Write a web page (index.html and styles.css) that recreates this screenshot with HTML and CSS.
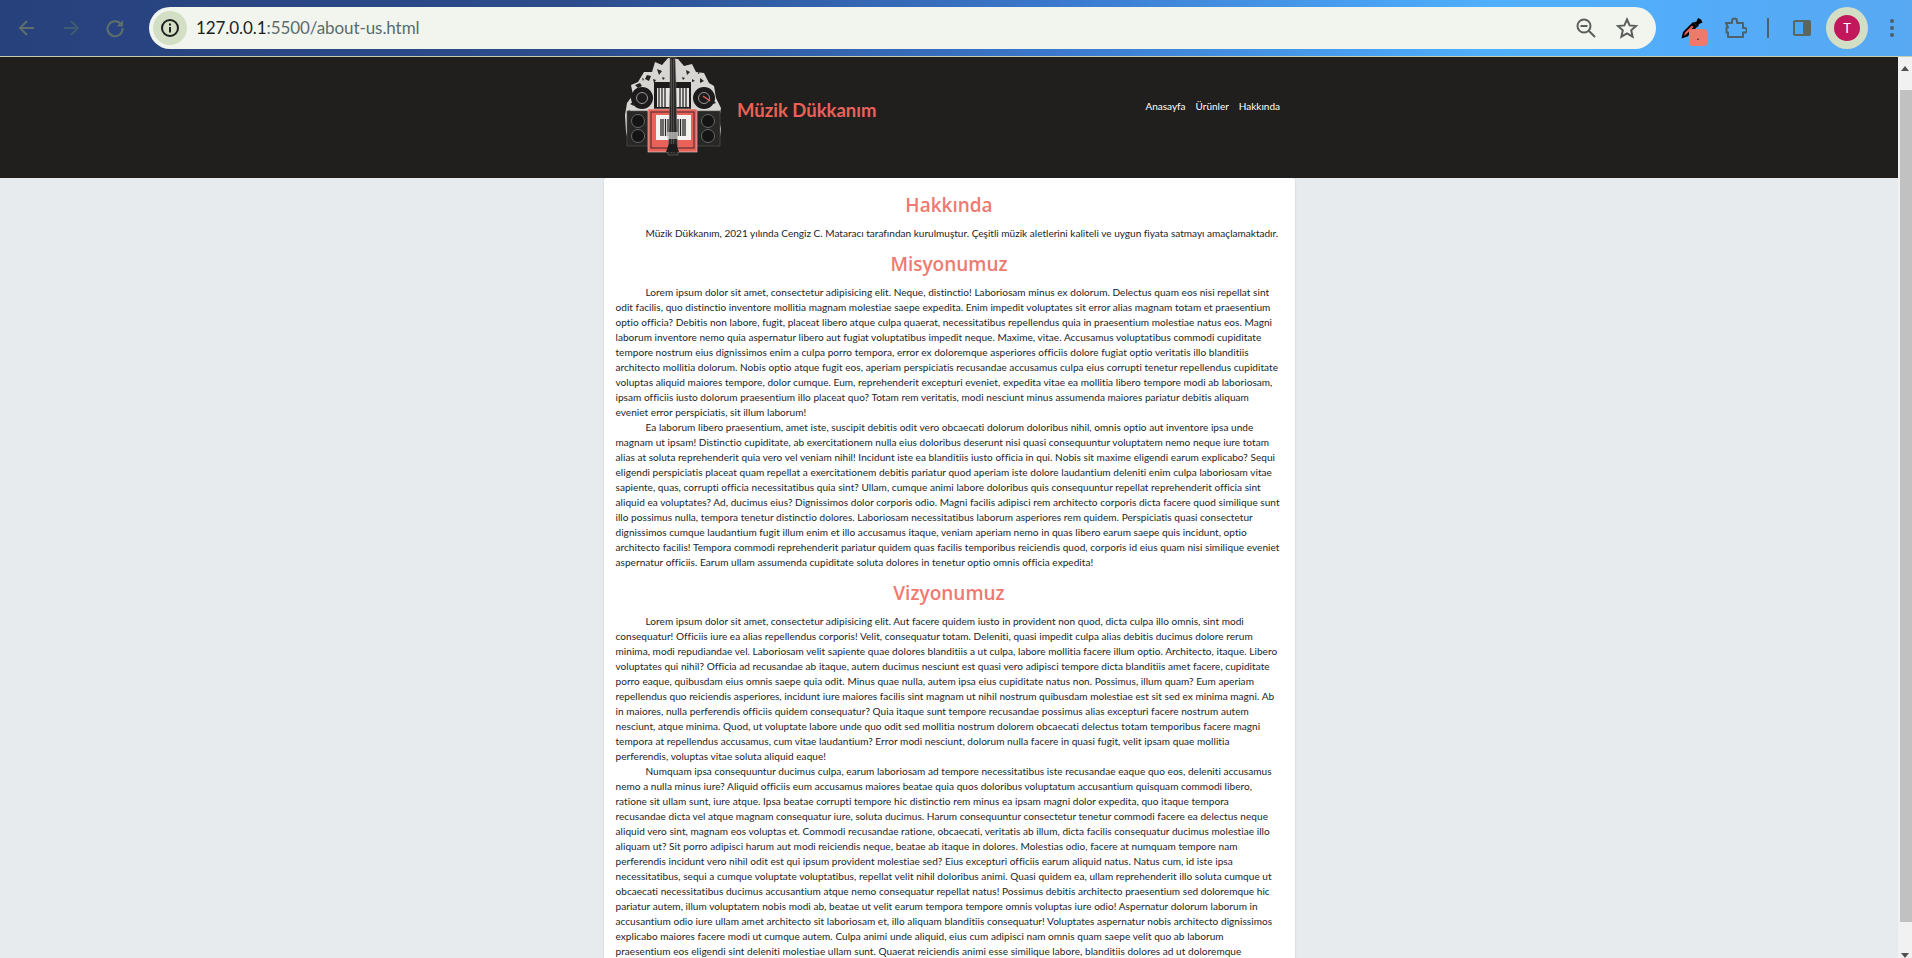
FILE: index.html
```html
<!DOCTYPE html>
<html>
<head>
  <title>Hakkında</title>
  <link rel="stylesheet" href="styles.css">
</head>
<body>
  <div class="toolbar">
    <div class="nav-icons">
      <svg class="icon" width="24" height="24" viewBox="0 0 24 24"><path d="M19 12H6M12 5l-7 7 7 7" fill="none" stroke="#5d6f6a" stroke-width="2"/></svg>
      <svg class="icon" width="24" height="24" viewBox="0 0 24 24"><path d="M5 12h13M12 5l7 7-7 7" fill="none" stroke="#3f5a74" stroke-width="2"/></svg>
      <svg class="icon" width="24" height="24" viewBox="0 0 24 24"><path d="M18.5 9A7.5 7.5 0 1 0 19.5 12" fill="none" stroke="#5d6f6a" stroke-width="2"/><path d="M20 4v6.5h-6.5z" fill="#5d6f6a"/></svg>
    </div>
    <div class="address">
      <span class="site-info">
        <svg width="22" height="22" viewBox="0 0 22 22"><circle cx="11" cy="11" r="8" fill="none" stroke="#1c1f1c" stroke-width="2"/><rect x="10" y="10" width="2" height="5.5" fill="#1c1f1c"/><rect x="10" y="6.5" width="2" height="2" fill="#1c1f1c"/></svg>
      </span>
      <span class="url"><b>127.0.0.1</b>:5500/about-us.html</span>
      <svg class="zoom-icon" width="24" height="24" viewBox="0 0 24 24"><circle cx="10" cy="10" r="6.5" fill="none" stroke="#5a5f5c" stroke-width="2"/><path d="M6.5 10h7M15 15l6 6" fill="none" stroke="#5a5f5c" stroke-width="2"/></svg>
      <svg class="star-icon" width="24" height="24" viewBox="0 0 24 24"><path d="M12 3.500l2.600 5.900 6.400.6-4.800 4.300 1.400 6.300L12 17.300l-5.600 3.300 1.400-6.300L3 10l6.400-.6z" fill="none" stroke="#5a5f5c" stroke-width="2"/></svg>
    </div>
    <div class="ext-icons">
      <span class="picker">
        <svg width="24" height="24" viewBox="0 0 24 24"><path d="M1.500 22.500L3 16 13 6l4.500 4.500-10 10z" fill="#000"/><path d="M4 20l1-3.500 7-7 1.500 1.500-7 7z" fill="#e8625a"/><path d="M13.500 6.500l3-1L18 2l3 1.500 1.500 3-3.500 1.500-1 3z" fill="#000"/></svg>
        <span class="badge">.</span>
      </span>
      <svg class="puzzle" width="24" height="24" viewBox="0 0 24 24"><path d="M3 7h6V5a2.500 2.500 0 0 1 5 0v2h6v5h1.500a2.300 2.300 0 0 1 0 4.600H20V21H5v-4.500H3.500V11.500H5z" fill="none" stroke="#4f6168" stroke-width="2" stroke-linejoin="round"/></svg>
      <span class="divider"></span>
      <svg class="panel" width="20" height="20" viewBox="0 0 20 20"><rect x="1" y="2" width="18" height="16" rx="2" fill="#5a665f"/><rect x="3" y="4" width="8" height="12" fill="#4ca6f8"/></svg>
      <span class="avatar"><span class="avatar-in">T</span></span>
      <span class="dots"><i></i><i></i><i></i></span>
    </div>
  </div>

  <div class="viewport">
    <div class="page">
      <div class="header">
        <div class="header-in">
          <svg class="logo" width="100" height="100" viewBox="0 0 100 100">
            <path d="M1 58L3 46 9 38 7 28 14 25 20 15 28 15 31 5 38 8 44 1 54 2 60 9 68 7 72 15 80 16 85 26 90 29 92 41 97 51 95 62 97 72 95 88 5 88 2 75z" fill="#d8d6d2"/>
            <path d="M11 28l5-2 2 3-4 2zM23 18l4 1-2 5-4-2zM33 12l5 2-3 4zM62 13l4 2-3 3zM76 21l4 3-4 2zM84 31l3 2-3 3zM6 47l3-2 1 4zM29 22l3 1-2 3zM68 22l3 2-3 1zM18 21l2 1-1 2zM38 20l3 1-2 2zM58 20l3 1-2 2zM74 15l2 1-2 1zM90 44l2 2-3 1zM4 54l2-1v3z" fill="#262322"/>
            <circle cx="18" cy="41" r="11" fill="#1d1b1b"/><circle cx="18" cy="41" r="5.500" fill="none" stroke="#999" stroke-width="1"/>
            <circle cx="80" cy="41" r="11" fill="#1d1b1b"/><circle cx="80" cy="41" r="5.500" fill="none" stroke="#999" stroke-width="1"/>
            <path d="M79 39l7 5" stroke="#e8625a" stroke-width="1.500"/>
            <rect x="3" y="54" width="23" height="35" fill="#2a2827" stroke="#555" stroke-width=".6"/>
            <circle cx="14" cy="64" r="6.500" fill="#151414" stroke="#666"/><circle cx="14" cy="79" r="6.500" fill="#151414" stroke="#666"/>
            <rect x="72" y="54" width="24" height="35" fill="#2a2827" stroke="#555" stroke-width=".6"/>
            <circle cx="84" cy="64" r="6.500" fill="#151414" stroke="#666"/><circle cx="84" cy="79" r="6.500" fill="#151414" stroke="#666"/>
            <rect x="30" y="25" width="37" height="27" fill="#1d1b1b"/>
            <path d="M33 31h32v19H33z" fill="#e6e4e0"/>
            <path d="M35 31v19M38 31v19M41 31v19M56 31v19M59 31v19M62 31v19" stroke="#1d1b1b" stroke-width="1.200"/>
            <rect x="24" y="52" width="49" height="43" fill="#e8625a" stroke="#d9d6d2" stroke-width=".6"/>
            <rect x="27" y="55" width="43" height="36" fill="none" stroke="#1d1b1b" stroke-width=".8"/>
            <rect x="32" y="58" width="35" height="25" fill="#f4f3f1"/>
            <path d="M37 62v17M39 62v17M41.500 62v17M44 62v17M47 62v17M51 62v17M54 62v17M56.500 62v17M59 62v17M61 62v17" stroke="#222" stroke-width="1.300"/>
            <path d="M46 0h5l1 28 1 50 1 20H44l1-20 1-50z" fill="#2a2827" stroke="#777" stroke-width=".5"/>
            <path d="M47.500 2v94M49.500 2v94" stroke="#888" stroke-width=".4"/>
            <path d="M42 95l3-8h7l3 8z" fill="#1d1b1b"/>
            <rect x="43" y="75" width="11" height="7" fill="#cfcdc9" opacity=".7"/>
          </svg>
          <div class="brand">Müzik Dükkanım</div>
          <div class="menu">
            <a>Anasayfa</a>
            <a>Ürünler</a>
            <a>Hakkında</a>
          </div>
        </div>
      </div>

      <div class="card">
        <h2>Hakkında</h2>
        <p class="intro">Müzik Dükkanım, 2021 yılında Cengiz C. Mataracı tarafından kurulmuştur. Çeşitli müzik aletlerini kaliteli ve uygun fiyata satmayı amaçlamaktadır.</p>
        <h2>Misyonumuz</h2>
        <p>Lorem ipsum dolor sit amet, consectetur adipisicing elit. Neque, distinctio! Laboriosam minus ex dolorum. Delectus quam eos nisi repellat sint<br>
odit facilis, quo distinctio inventore mollitia magnam molestiae saepe expedita. Enim impedit voluptates sit error alias magnam totam et praesentium<br>
optio officia? Debitis non labore, fugit, placeat libero atque culpa quaerat, necessitatibus repellendus quia in praesentium molestiae natus eos. Magni<br>
laborum inventore nemo quia aspernatur libero aut fugiat voluptatibus impedit neque. Maxime, vitae. Accusamus voluptatibus commodi cupiditate<br>
tempore nostrum eius dignissimos enim a culpa porro tempora, error ex doloremque asperiores officiis dolore fugiat optio veritatis illo blanditiis<br>
architecto mollitia dolorum. Nobis optio atque fugit eos, aperiam perspiciatis recusandae accusamus culpa eius corrupti tenetur repellendus cupiditate<br>
voluptas aliquid maiores tempore, dolor cumque. Eum, reprehenderit excepturi eveniet, expedita vitae ea mollitia libero tempore modi ab laboriosam,<br>
ipsam officiis iusto dolorum praesentium illo placeat quo? Totam rem veritatis, modi nesciunt minus assumenda maiores pariatur debitis aliquam<br>
eveniet error perspiciatis, sit illum laborum!</p>
        <p>Ea laborum libero praesentium, amet iste, suscipit debitis odit vero obcaecati dolorum doloribus nihil, omnis optio aut inventore ipsa unde<br>
magnam ut ipsam! Distinctio cupiditate, ab exercitationem nulla eius doloribus deserunt nisi quasi consequuntur voluptatem nemo neque iure totam<br>
alias at soluta reprehenderit quia vero vel veniam nihil! Incidunt iste ea blanditiis iusto officia in qui. Nobis sit maxime eligendi earum explicabo? Sequi<br>
eligendi perspiciatis placeat quam repellat a exercitationem debitis pariatur quod aperiam iste dolore laudantium deleniti enim culpa laboriosam vitae<br>
sapiente, quas, corrupti officia necessitatibus quia sint? Ullam, cumque animi labore doloribus quis consequuntur repellat reprehenderit officia sint<br>
aliquid ea voluptates? Ad, ducimus eius? Dignissimos dolor corporis odio. Magni facilis adipisci rem architecto corporis dicta facere quod similique sunt<br>
illo possimus nulla, tempora tenetur distinctio dolores. Laboriosam necessitatibus laborum asperiores rem quidem. Perspiciatis quasi consectetur<br>
dignissimos cumque laudantium fugit illum enim et illo accusamus itaque, veniam aperiam nemo in quas libero earum saepe quis incidunt, optio<br>
architecto facilis! Tempora commodi reprehenderit pariatur quidem quas facilis temporibus reiciendis quod, corporis id eius quam nisi similique eveniet<br>
aspernatur officiis. Earum ullam assumenda cupiditate soluta dolores in tenetur optio omnis officia expedita!</p>
        <h2>Vizyonumuz</h2>
        <p>Lorem ipsum dolor sit amet, consectetur adipisicing elit. Aut facere quidem iusto in provident non quod, dicta culpa illo omnis, sint modi<br>
consequatur! Officiis iure ea alias repellendus corporis! Velit, consequatur totam. Deleniti, quasi impedit culpa alias debitis ducimus dolore rerum<br>
minima, modi repudiandae vel. Laboriosam velit sapiente quae dolores blanditiis a ut culpa, labore mollitia facere illum optio. Architecto, itaque. Libero<br>
voluptates qui nihil? Officia ad recusandae ab itaque, autem ducimus nesciunt est quasi vero adipisci tempore dicta blanditiis amet facere, cupiditate<br>
porro eaque, quibusdam eius omnis saepe quia odit. Minus quae nulla, autem ipsa eius cupiditate natus non. Possimus, illum quam? Eum aperiam<br>
repellendus quo reiciendis asperiores, incidunt iure maiores facilis sint magnam ut nihil nostrum quibusdam molestiae est sit sed ex minima magni. Ab<br>
in maiores, nulla perferendis officiis quidem consequatur? Quia itaque sunt tempore recusandae possimus alias excepturi facere nostrum autem<br>
nesciunt, atque minima. Quod, ut voluptate labore unde quo odit sed mollitia nostrum dolorem obcaecati delectus totam temporibus facere magni<br>
tempora at repellendus accusamus, cum vitae laudantium? Error modi nesciunt, dolorum nulla facere in quasi fugit, velit ipsam quae mollitia<br>
perferendis, voluptas vitae soluta aliquid eaque!</p>
        <p>Numquam ipsa consequuntur ducimus culpa, earum laboriosam ad tempore necessitatibus iste recusandae eaque quo eos, deleniti accusamus<br>
nemo a nulla minus iure? Aliquid officiis eum accusamus maiores beatae quia quos doloribus voluptatum accusantium quisquam commodi libero,<br>
ratione sit ullam sunt, iure atque. Ipsa beatae corrupti tempore hic distinctio rem minus ea ipsam magni dolor expedita, quo itaque tempora<br>
recusandae dicta vel atque magnam consequatur iure, soluta ducimus. Harum consequuntur consectetur tenetur commodi facere ea delectus neque<br>
aliquid vero sint, magnam eos voluptas et. Commodi recusandae ratione, obcaecati, veritatis ab illum, dicta facilis consequatur ducimus molestiae illo<br>
aliquam ut? Sit porro adipisci harum aut modi reiciendis neque, beatae ab itaque in dolores. Molestias odio, facere at numquam tempore nam<br>
perferendis incidunt vero nihil odit est qui ipsum provident molestiae sed? Eius excepturi officiis earum aliquid natus. Natus cum, id iste ipsa<br>
necessitatibus, sequi a cumque voluptate voluptatibus, repellat velit nihil doloribus animi. Quasi quidem ea, ullam reprehenderit illo soluta cumque ut<br>
obcaecati necessitatibus ducimus accusantium atque nemo consequatur repellat natus! Possimus debitis architecto praesentium sed doloremque hic<br>
pariatur autem, illum voluptatem nobis modi ab, beatae ut velit earum tempora tempore omnis voluptas iure odio! Aspernatur dolorum laborum in<br>
accusantium odio iure ullam amet architecto sit laboriosam et, illo aliquam blanditiis consequatur! Voluptates aspernatur nobis architecto dignissimos<br>
explicabo maiores facere modi ut cumque autem. Culpa animi unde aliquid, eius cum adipisci nam omnis quam saepe velit quo ab laborum<br>
praesentium eos eligendi sint deleniti molestiae ullam sunt. Quaerat reiciendis animi esse similique labore, blanditiis dolores ad ut doloremque</p>
      </div>
    </div>
    <div class="scrollbar">
      <span class="arrow-up"></span>
      <span class="thumb"></span>
      <span class="arrow-down"></span>
    </div>
  </div>
</body>
</html>
```

FILE: styles.css
```css
html, body {
  margin: 0;
  height: 100%;
  overflow: hidden;
}

body {
  font-family: "Lato", "Open Sans", sans-serif;
  font-variant-ligatures: none;
  background-color: #e8ebee;
}

/* tarayici cubugu */
.toolbar {
  display: flex;
  align-items: center;
  height: 56px;
  border-bottom: 1px solid #c4d0b0;
  background: linear-gradient(90deg, #27417c 0%, #2c4c8c 30%, #3a78cc 55%, #4fb0ff 78%, #58a8f2 100%);
}

.nav-icons {
  display: flex;
  gap: 20px;
  margin-left: 15px;
  margin-right: 22px;
}

.icon {
  display: block;
}

.address {
  display: flex;
  align-items: center;
  width: 1507px;
  height: 42px;
  border-radius: 21px;
  background-color: #f2f5ee;
}

.site-info {
  display: flex;
  align-items: center;
  justify-content: center;
  width: 34px;
  height: 34px;
  margin-left: 4px;
  border-radius: 50%;
  background-color: #d3dfc4;
}

.url {
  flex: 1;
  margin-left: 9px;
  margin-bottom: 2px;
  font-size: 17px;
  letter-spacing: -0.08px;
  color: #5a6b6e;
}

.url b {
  font-weight: normal;
  color: #1a2226;
}

.zoom-icon {
  margin-right: 17px;
}

.star-icon {
  margin-right: 17px;
}

.ext-icons {
  display: flex;
  align-items: center;
  margin-left: 24px;
}

.picker {
  position: relative;
  display: block;
  width: 24px;
  height: 24px;
  margin-right: 19px;
}

.badge {
  position: absolute;
  left: 9px;
  top: 13px;
  width: 18px;
  height: 17px;
  border-radius: 3px;
  background-color: #ee7a6c;
  color: #222;
  font-size: 12px;
  line-height: 13px;
  text-align: center;
}

.puzzle {
  margin-right: 20px;
}

.divider {
  width: 2px;
  height: 20px;
  background-color: #4f6168;
  margin-right: 23px;
}

.panel {
  margin-right: 14px;
}

.avatar {
  display: flex;
  align-items: center;
  justify-content: center;
  width: 42px;
  height: 42px;
  border-radius: 50%;
  background-color: #d3dfc4;
  margin-right: 22px;
}

.avatar-in {
  width: 26px;
  height: 26px;
  border-radius: 50%;
  background-color: #c2185b;
  color: #fff;
  font-size: 13px;
  line-height: 26px;
  text-align: center;
}

.dots {
  display: flex;
  flex-direction: column;
  gap: 3px;
}

.dots i {
  display: block;
  width: 4px;
  height: 4px;
  border-radius: 50%;
  background-color: #4f6168;
}

/* sayfa */
.viewport {
  display: flex;
  height: 901px;
}

.page {
  flex: 1;
  overflow: hidden;
}

.header {
  height: 121px;
  background-color: #211e1e;
}

.header-in {
  display: flex;
  align-items: center;
  width: 656px;
  height: 100px;
  margin: 0 auto;
  padding: 0 14px 0 20px;
}

.logo {
  display: block;
  margin-right: 13px;
}

.brand {
  flex: 1;
  padding-top: 6px;
  font-size: 18.5px;
  font-weight: bold;
  color: #e8625a;
}

.menu {
  display: flex;
  gap: 10px;
  margin-bottom: 3px;
}

.menu a {
  font-size: 10px;
  color: #fff;
}

.card {
  box-sizing: border-box;
  width: 691px;
  margin: 0 auto;
  padding: 14px 12px 40px;
  border-radius: 3px;
  background-color: #fff;
  box-shadow: 0 0 2px rgba(0, 0, 0, 0.15);
}

.card h2 {
  margin: 0;
  height: 34px;
  font-family: "Open Sans", sans-serif;
  font-size: 19px;
  font-weight: 600;
  line-height: 26px;
  color: #ee7a70;
  text-align: center;
}

.card p {
  margin: 0;
  font-size: 10.05px;
  letter-spacing: 0.04px;
  line-height: 15px;
  color: #212529;
  text-indent: 30px;
  white-space: nowrap;
}

.card p.intro {
  letter-spacing: 0;
}

.card p + h2 {
  margin-top: 10px;
}

/* kaydirma cubugu */
.scrollbar {
  position: relative;
  width: 14px;
  background-color: #f1f1f1;
}

.thumb {
  position: absolute;
  left: 2px;
  right: 0;
  top: 33px;
  height: 832px;
  background-color: #c1c1c1;
}

.arrow-up,
.arrow-down {
  position: absolute;
  left: 3px;
  width: 0;
  height: 0;
  border-left: 4px solid transparent;
  border-right: 4px solid transparent;
}

.arrow-up {
  top: 9px;
  border-bottom: 5px solid #505050;
}

.arrow-down {
  bottom: 0;
  border-top: 5px solid #505050;
}
```
